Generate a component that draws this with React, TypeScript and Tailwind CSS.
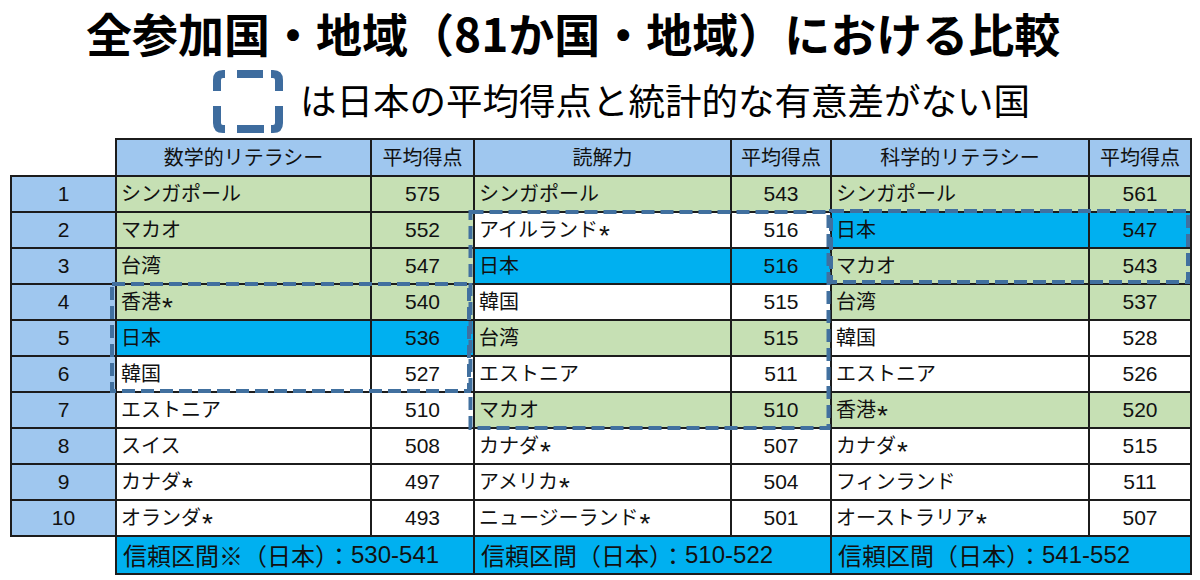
import React from "react";

type Cell = { name: string; score: number; c: "g" | "b" | "w" };

const math: Cell[] = [
  { name: "シンガポール", score: 575, c: "g" },
  { name: "マカオ", score: 552, c: "g" },
  { name: "台湾", score: 547, c: "g" },
  { name: "香港*", score: 540, c: "g" },
  { name: "日本", score: 536, c: "b" },
  { name: "韓国", score: 527, c: "w" },
  { name: "エストニア", score: 510, c: "w" },
  { name: "スイス", score: 508, c: "w" },
  { name: "カナダ*", score: 497, c: "w" },
  { name: "オランダ*", score: 493, c: "w" },
];
const reading: Cell[] = [
  { name: "シンガポール", score: 543, c: "g" },
  { name: "アイルランド*", score: 516, c: "w" },
  { name: "日本", score: 516, c: "b" },
  { name: "韓国", score: 515, c: "w" },
  { name: "台湾", score: 515, c: "g" },
  { name: "エストニア", score: 511, c: "w" },
  { name: "マカオ", score: 510, c: "g" },
  { name: "カナダ*", score: 507, c: "w" },
  { name: "アメリカ*", score: 504, c: "w" },
  { name: "ニュージーランド*", score: 501, c: "w" },
];
const science: Cell[] = [
  { name: "シンガポール", score: 561, c: "g" },
  { name: "日本", score: 547, c: "b" },
  { name: "マカオ", score: 543, c: "g" },
  { name: "台湾", score: 537, c: "g" },
  { name: "韓国", score: 528, c: "w" },
  { name: "エストニア", score: 526, c: "w" },
  { name: "香港*", score: 520, c: "g" },
  { name: "カナダ*", score: 515, c: "w" },
  { name: "フィンランド", score: 511, c: "w" },
  { name: "オーストラリア*", score: 507, c: "w" },
];

const bg = (c: Cell["c"]) =>
  c === "g" ? "bg-[#c6e0b4]" : c === "b" ? "bg-[#00b0f0]" : "bg-white";

const td = "border-2 border-[#1c1c1c] h-[36px] p-0";

function Name({ s }: { s: string }) {
  if (s.endsWith("*")) {
    return (
      <>
        {s.slice(0, -1)}
        <span className="inline-block text-[28px] leading-[0] translate-y-[8px] ml-[1px]">*</span>
      </>
    );
  }
  return <>{s}</>;
}

function Icon() {
  return (
    <svg width="70" height="63" viewBox="0 0 70 63" fill="none" stroke="#3e6c9e" strokeWidth="8">
      <path d="M4 21 V10 Q4 4 10 4 H12" />
      <path d="M24 4 H50" />
      <path d="M58 4 H60 Q66 4 66 10 V21" />
      <path d="M4 36 V53 Q4 59 10 59 H12" />
      <path d="M24 59 H51" />
      <path d="M58 59 H60 Q66 59 66 53 V36" />
    </svg>
  );
}

function Footer({ label, range }: { label: string; range: string }) {
  return (
    <td
      colSpan={2}
      className="border-2 border-[#1c1c1c] h-[36px] p-0 pl-[6px] bg-[#00b0f0] text-[24px] text-left whitespace-nowrap font-['Noto_Sans_CJK_JP',sans-serif]"
    >
      <span className="inline-flex items-center">
        {label}
        <span className="text-[24px] font-['Liberation_Sans',sans-serif]">{range}</span>
      </span>
    </td>
  );
}

export default function App() {
  const cols = [math, reading, science];
  return (
    <div className="relative w-[1200px] h-[580px] overflow-hidden bg-white text-[#111] font-['Liberation_Sans','Noto_Sans_CJK_JP',sans-serif]">
      <div className="h-[64px] pl-[86px] leading-[64px] text-[46px] font-bold font-['Noto_Sans_CJK_JP',sans-serif] text-black whitespace-nowrap">
        全参加国・地域（81か国・地域）における比較
      </div>
      <div className="h-[74px] flex items-center pl-[213px] gap-[17px]">
        <Icon />
        <span className="text-[36.5px] font-['Noto_Sans_CJK_JP',sans-serif] text-black leading-none -mt-[2px]">
          は日本の平均得点と統計的な有意差がない国
        </span>
      </div>
      <table className="ml-[10px] w-[1181px] table-fixed border-collapse text-[20px]">
        <colgroup>
          <col className="w-[105px]" />
          <col className="w-[255px]" />
          <col className="w-[103px]" />
          <col className="w-[257px]" />
          <col className="w-[100px]" />
          <col className="w-[258px]" />
          <col className="w-[102px]" />
        </colgroup>
        <thead>
          <tr>
            <th className="p-0 h-[37px] bg-white"></th>
            {["数学的リテラシー", "読解力", "科学的リテラシー"].map((h) => (
              <React.Fragment key={h}>
                <th className="border-2 border-[#1c1c1c] h-[37px] p-0 bg-[#9fc7ef] font-normal text-center">{h}</th>
                <th className="border-2 border-[#1c1c1c] h-[37px] p-0 bg-[#9fc7ef] font-normal text-center">平均得点</th>
              </React.Fragment>
            ))}
          </tr>
        </thead>
        <tbody>
          {math.map((_, i) => (
            <tr key={i}>
              <td className={`${td} bg-[#9fc7ef] text-center text-[21px]`}>{i + 1}</td>
              {cols.map((col, j) => (
                <React.Fragment key={j}>
                  <td className={`${td} ${bg(col[i].c)} pl-[4px] text-left whitespace-nowrap`}>
                    <Name s={col[i].name} />
                  </td>
                  <td className={`${td} ${bg(col[i].c)} text-center text-[21px]`}>{col[i].score}</td>
                </React.Fragment>
              ))}
            </tr>
          ))}
          <tr>
            <td className="p-0 h-[36px] bg-white"></td>
            <Footer label="信頼区間※（日本）：" range="530-541" />
            <Footer label="信頼区間（日本）：" range="510-522" />
            <Footer label="信頼区間（日本）：" range="541-552" />
          </tr>
        </tbody>
      </table>
      <svg className="absolute left-0 top-0 pointer-events-none" width="1200" height="580" fill="none" stroke="#41709f" strokeWidth="4" strokeDasharray="13 6">
        <rect x="112" y="284" width="357" height="107" />
        <rect x="470.5" y="212" width="358" height="216" />
        <rect x="831" y="211" width="357" height="71" />
      </svg>
    </div>
  );
}
